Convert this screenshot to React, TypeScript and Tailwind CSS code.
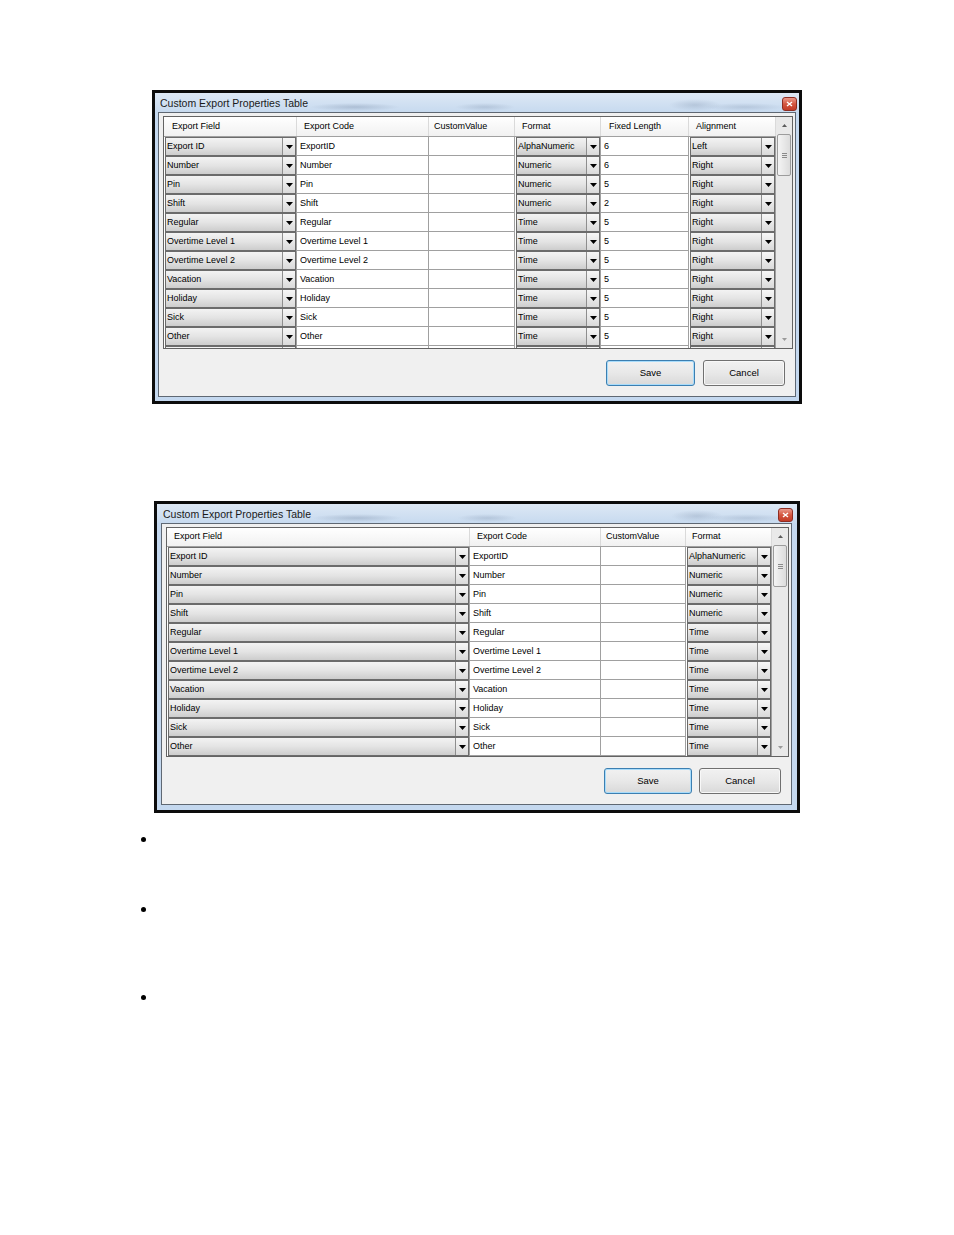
import React from "react";

type Row = {
  field: string;
  code: string;
  format: string;
  length: string;
  align: string;
};

type Col = {
  label: string;
  width: string;
  pad: string;
  kind: "combo" | "text" | "empty";
  key?: keyof Row;
};

const rows: Row[] = [
  { field: "Export ID", code: "ExportID", format: "AlphaNumeric", length: "6", align: "Left" },
  { field: "Number", code: "Number", format: "Numeric", length: "6", align: "Right" },
  { field: "Pin", code: "Pin", format: "Numeric", length: "5", align: "Right" },
  { field: "Shift", code: "Shift", format: "Numeric", length: "2", align: "Right" },
  { field: "Regular", code: "Regular", format: "Time", length: "5", align: "Right" },
  { field: "Overtime Level 1", code: "Overtime Level 1", format: "Time", length: "5", align: "Right" },
  { field: "Overtime Level 2", code: "Overtime Level 2", format: "Time", length: "5", align: "Right" },
  { field: "Vacation", code: "Vacation", format: "Time", length: "5", align: "Right" },
  { field: "Holiday", code: "Holiday", format: "Time", length: "5", align: "Right" },
  { field: "Sick", code: "Sick", format: "Time", length: "5", align: "Right" },
  { field: "Other", code: "Other", format: "Time", length: "5", align: "Right" },
  // next row, cut off by the grid edge
  { field: "", code: "", format: "", length: "", align: "" },
];

const wideCols: Col[] = [
  { label: "Export Field", width: "w-[133px]", pad: "pl-[8px]", kind: "combo", key: "field" },
  { label: "Export Code", width: "w-[132px]", pad: "pl-[7px]", kind: "text", key: "code" },
  { label: "CustomValue", width: "w-[86px]", pad: "pl-[5px]", kind: "empty" },
  { label: "Format", width: "w-[86px]", pad: "pl-[7px]", kind: "combo", key: "format" },
  { label: "Fixed Length", width: "w-[88px]", pad: "pl-[8px]", kind: "text", key: "length" },
  { label: "Alignment", width: "w-[87px]", pad: "pl-[7px]", kind: "combo", key: "align" },
];

const narrowCols: Col[] = [
  { label: "Export Field", width: "w-[303px]", pad: "pl-[7px]", kind: "combo", key: "field" },
  { label: "Export Code", width: "w-[131px]", pad: "pl-[7px]", kind: "text", key: "code" },
  { label: "CustomValue", width: "w-[85px]", pad: "pl-[5px]", kind: "empty" },
  { label: "Format", width: "w-[86px]", pad: "pl-[6px]", kind: "combo", key: "format" },
];

const DownTriangle = () => (
  <svg width="7" height="4" viewBox="0 0 7 4">
    <path d="M0 0h7L3.5 4z" fill="#000" />
  </svg>
);

const Combo = ({ text, width }: { text: string; width: string }) => (
  <div className={`${width} h-[19px] shrink-0 border-r border-[#a0a0a0] bg-white pl-[1px]`}>
    <div className="flex h-[19px] border border-[#6b6b6b] bg-gradient-to-b from-[#f3f3f3] via-[#e4e4e4] to-[#cdcdcd]">
      <span className="flex-1 overflow-hidden whitespace-nowrap pl-[1px] leading-[17px]">{text}</span>
      <span className="flex w-[13px] items-center justify-center border-l border-[#8e8e8e] bg-gradient-to-b from-[#f7f7f7] to-[#dadada]">
        <DownTriangle />
      </span>
    </div>
  </div>
);

const TextCell = ({ text, width, empty }: { text: string; width: string; empty?: boolean }) => (
  <div
    className={`${width} h-[19px] shrink-0 overflow-hidden whitespace-nowrap border-r border-b border-[#a0a0a0] bg-white pl-[3px] leading-[18px]`}
  >
    {empty ? "" : text}
  </div>
);

const Scrollbar = () => (
  <div className="flex w-[16px] shrink-0 flex-col bg-[#e9e9e9]">
    <div className="flex h-[17px] items-center justify-center">
      <svg width="5" height="3" viewBox="0 0 5 3">
        <path d="M0 3h5L2.5 0z" fill="#5c5c5c" />
      </svg>
    </div>
    <div className="mx-[1px] flex h-[42px] flex-col items-center justify-center gap-[1px] rounded-[2px] border border-[#9c9c9c] bg-gradient-to-r from-[#f4f4f4] to-[#dcdcdc]">
      <span className="h-px w-[5px] bg-[#8a8a8a]" />
      <span className="h-px w-[5px] bg-[#8a8a8a]" />
      <span className="h-px w-[5px] bg-[#8a8a8a]" />
    </div>
    <div className="flex-1" />
    <div className="flex h-[17px] items-center justify-center">
      <svg width="5" height="3" viewBox="0 0 5 3">
        <path d="M0 0h5L2.5 3z" fill="#9a9a9a" />
      </svg>
    </div>
  </div>
);

interface DialogProps {
  cols: Col[];
  frame: string;
  titlePad: string;
  closeGap: string;
  pane: string;
  grid: string;
  headerH: string;
  saveW: string;
  cancelW: string;
  btnGap: string;
}

const Dialog: React.FC<DialogProps> = ({
  cols,
  frame,
  titlePad,
  closeGap,
  pane,
  grid,
  headerH,
  saveW,
  cancelW,
  btnGap,
}) => {
  return (
    <div className={`${frame} flex flex-col border-[3px] border-[#0c0c0c] bg-[#c4d8ef]`}>
      <div
        className={`flex h-[19px] shrink-0 ${titlePad} bg-[radial-gradient(ellipse_45px_4px_at_200px_14px,rgba(90,110,140,0.28),transparent),radial-gradient(ellipse_30px_4px_at_330px_14px,rgba(90,110,140,0.22),transparent),radial-gradient(ellipse_26px_6px_at_540px_12px,rgba(90,110,140,0.22),transparent),radial-gradient(ellipse_40px_4px_at_590px_14px,rgba(90,110,140,0.2),transparent),linear-gradient(to_bottom,#dde8f5,#c7daef)]`}
      >
        <span className="flex-1 pt-[3px] text-[10.5px] leading-[14px] text-[#1a1a1a]">
          Custom Export Properties Table
        </span>
        <div
          className={`${closeGap} mt-[4px] flex h-[14px] w-[15px] items-center justify-center rounded-[3px] border border-[#8e2d22] bg-gradient-to-b from-[#e9998c] via-[#d4553f] to-[#c23b27]`}
        >
          <svg width="7" height="6" viewBox="0 0 7 6">
            <path d="M1 1l5 4M6 1L1 5" stroke="#fff" strokeWidth="1.4" />
          </svg>
        </div>
      </div>

      <div className={`${pane} flex flex-1 flex-col border border-[#5f6873] bg-[#f0f0f0]`}>
        <div className={`${grid} flex overflow-hidden border border-[#636363] bg-white`}>
          <div className="flex flex-1 flex-col overflow-hidden">
            <div className={`flex ${headerH} shrink-0 border-b border-[#a0a0a0] bg-gradient-to-b from-white to-[#f1f1f1]`}>
              {cols.map((c) => (
                <div
                  key={c.label}
                  className={`${c.width} ${c.pad} flex shrink-0 items-center whitespace-nowrap border-r border-[#dadada]`}
                >
                  {c.label}
                </div>
              ))}
            </div>
            {rows.map((r, i) => (
              <div key={i} className="flex shrink-0">
                {cols.map((c) =>
                  c.kind === "combo" ? (
                    <Combo key={c.label} text={r[c.key!]} width={c.width} />
                  ) : (
                    <TextCell
                      key={c.label}
                      text={c.key ? r[c.key] : ""}
                      width={c.width}
                      empty={c.kind === "empty"}
                    />
                  )
                )}
              </div>
            ))}
          </div>
          <Scrollbar />
        </div>

        <div className={`mt-[11px] flex justify-end ${btnGap} pr-[10px]`}>
          <div
            className={`${saveW} flex h-[26px] items-center justify-center rounded-[3px] border border-[#3c7fb1] bg-gradient-to-b from-[#f1f1f1] via-[#e8e8e8] to-[#d9d9d9] text-[9.5px] shadow-[inset_0_0_0_1px_#a8dcfb]`}
          >
            Save
          </div>
          <div
            className={`${cancelW} flex h-[26px] items-center justify-center rounded-[3px] border border-[#707070] bg-gradient-to-b from-[#f1f1f1] via-[#e8e8e8] to-[#d9d9d9] text-[9.5px] shadow-[inset_0_0_0_1px_#f8f8f8]`}
          >
            Cancel
          </div>
        </div>
      </div>
    </div>
  );
};

const App = () => {
  return (
    <div className="h-[1235px] w-[954px] overflow-hidden bg-white pt-[90px] font-['Liberation_Sans',Arial,sans-serif] text-[9px] text-black">
      <Dialog
        cols={wideCols}
        frame="ml-[152px] w-[650px] h-[314px]"
        titlePad="pl-[5px]"
        closeGap="mr-[2px]"
        pane="mx-[3px] mb-[4px]"
        grid="ml-[4px] mt-[3px] w-[630px] h-[233px]"
        headerH="h-[20px]"
        saveW="w-[89px]"
        cancelW="w-[82px]"
        btnGap="gap-[8px]"
      />

      <div className="mt-[97px]">
        <Dialog
          cols={narrowCols}
          frame="ml-[154px] w-[646px] h-[312px]"
          titlePad="pl-[6px]"
          closeGap="mr-[4px]"
          pane="ml-[4px] mr-[5px] mb-[5px]"
          grid="ml-[4px] mt-[3px] w-[623px] h-[230px]"
          headerH="h-[19px]"
          saveW="w-[88px]"
          cancelW="w-[82px]"
          btnGap="gap-[7px]"
        />
      </div>

      <ul className="ml-[141px] mt-[24px] flex flex-col">
        <li className="h-[5px] w-[5px] rounded-full bg-black" />
        <li className="mt-[65px] h-[5px] w-[5px] rounded-full bg-black" />
        <li className="mt-[83px] h-[5px] w-[5px] rounded-full bg-black" />
      </ul>
    </div>
  );
};

export default App;
